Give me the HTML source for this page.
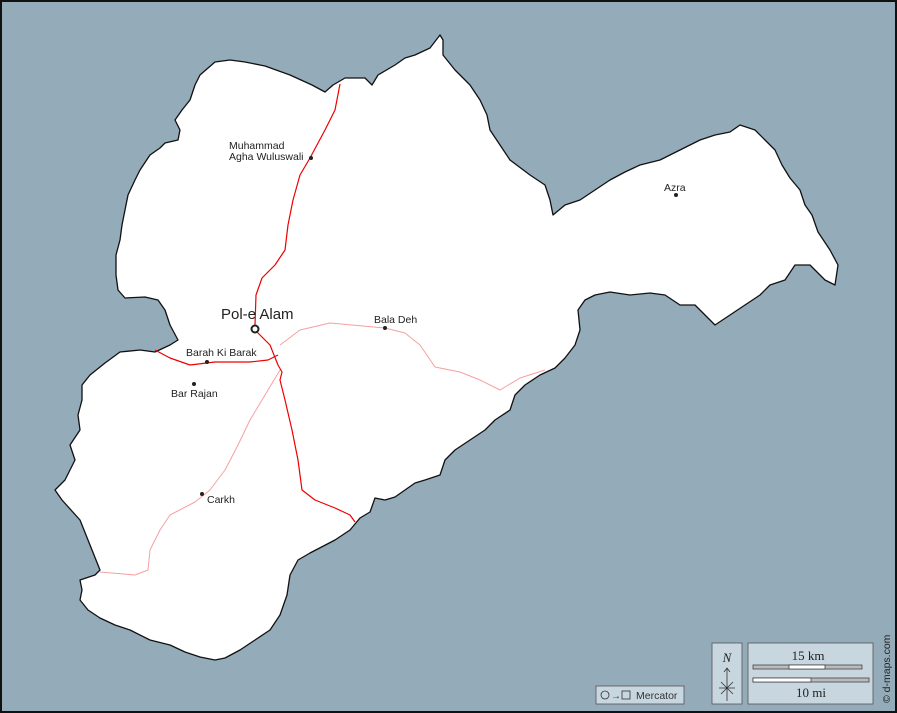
<!DOCTYPE html><html><head><meta charset="utf-8"><style>body{margin:0;width:897px;height:713px;overflow:hidden;background:#000}svg{display:block}text{font-family:"Liberation Sans",sans-serif}</style></head><body>
<svg width="897" height="713" viewBox="0 0 897 713">
<rect x="0" y="0" width="897" height="713" fill="#111"/>
<rect x="2" y="2" width="893" height="709" fill="#94abba"/>
<path fill="#fff" stroke="#111" stroke-width="1.3" stroke-linejoin="round" d="M200,75 L215,62 230,60 245,62 265,66 290,75 312,85 325,92 333,85 345,78 365,78 372,85 378,75 395,65 405,58 415,55 430,48 440,35 443,40 443,55 455,70 470,85 480,100 487,115 490,130 500,145 510,160 530,175 545,185 550,200 553,215 565,205 580,200 595,190 610,180 625,172 640,165 660,160 680,150 700,140 715,135 730,132 740,125 755,130 765,140 775,150 782,165 790,178 800,190 805,205 812,215 818,232 830,250 838,265 835,285 825,280 810,265 795,265 785,280 770,285 760,295 745,305 730,315 715,325 705,315 695,305 680,305 665,295 650,293 630,295 610,292 595,295 585,300 578,310 580,330 575,345 565,358 555,368 540,375 525,385 515,395 510,410 495,420 485,430 470,440 455,450 445,460 440,475 425,480 415,483 405,490 395,497 385,500 375,498 370,512 360,518 350,530 335,540 310,553 298,560 290,575 287,595 280,615 270,630 255,640 240,650 225,658 215,660 200,657 185,652 170,645 150,640 130,630 115,625 100,618 88,610 80,600 82,590 80,580 95,575 100,570 90,545 80,520 62,500 55,490 65,480 70,470 75,460 70,445 80,430 78,415 82,400 82,385 90,375 105,363 120,352 140,350 155,352 170,345 178,340 170,325 165,310 158,300 145,297 125,298 118,290 116,275 116,255 120,240 122,225 125,210 128,195 135,180 140,170 150,155 160,148 165,143 178,140 180,130 175,120 182,110 190,100 195,85 Z"/>
<g fill="none" stroke-linejoin="round">
<path stroke="#f5a0a0" stroke-width="1" d="M280,345 L300,330 330,323 385,328 405,333 420,345 435,367 460,372 480,380 500,390 520,378 545,370"/>
<path stroke="#f5a0a0" stroke-width="1" d="M280,370 L265,395 250,420 238,445 225,470 210,490 195,502 170,515 160,530 150,550 148,570 135,575 100,572"/>
<path stroke="#e00" stroke-width="1.2" d="M340,84 L335,110 325,130 310,158 300,175 293,200 288,225 285,250 275,265 262,278 256,295 255,325"/>
<path stroke="#e00" stroke-width="1.2" d="M257,332 L270,345 278,365 282,372 280,380 285,400 292,430 298,460 302,490 315,500 335,508 350,515 355,522"/>
<path stroke="#e00" stroke-width="1.2" d="M278,355 L268,360 250,362 215,362 190,365 170,358 155,350"/>
</g>
<g fill="#222">
<circle cx="311" cy="158" r="2"/><circle cx="676" cy="195" r="2"/><circle cx="385" cy="328" r="2"/><circle cx="207" cy="362" r="2"/><circle cx="194" cy="384" r="2"/><circle cx="202" cy="494" r="2"/>
</g>
<circle cx="255" cy="329" r="3.5" fill="#fff" stroke="#222" stroke-width="2"/>
<g fill="#222" font-size="10.5">
<text x="229" y="149">Muhammad</text><text x="229" y="160">Agha Wuluswali</text>
<text x="664" y="191">Azra</text>
<text x="374" y="323">Bala Deh</text>
<text x="186" y="356">Barah Ki Barak</text>
<text x="171" y="397">Bar Rajan</text>
<text x="207" y="503">Carkh</text>
<text x="221" y="319" font-size="15">Pol-e Alam</text>
</g>
<rect x="596" y="686" width="88" height="18" fill="#c8d6e0" stroke="#555" stroke-width="0.8"/>
<circle cx="605" cy="695" r="4" fill="none" stroke="#333" stroke-width="0.8"/>
<text x="611" y="699" font-size="10" fill="#333">→</text>
<rect x="622" y="691" width="8" height="8" fill="none" stroke="#333" stroke-width="0.8"/>
<text x="636" y="699" font-size="10.5" fill="#333">Mercator</text>
<rect x="712" y="643" width="30" height="61" fill="#c8d6e0" stroke="#555" stroke-width="0.8"/>
<text x="727" y="662" font-size="13" font-style="italic" text-anchor="middle" font-family="Liberation Serif" fill="#222" style="font-family:'Liberation Serif',serif">N</text>
<path d="M727,701 L727,668 M724,672 L727,668 730,672 M719,688 L735,688 M721,682 L733,694 M733,682 L721,694" stroke="#333" stroke-width="0.8" fill="none"/>
<rect x="748" y="643" width="125" height="61" fill="#c8d6e0" stroke="#555" stroke-width="0.8"/>
<text x="808" y="660" font-size="13" text-anchor="middle" fill="#222" style="font-family:'Liberation Serif',serif">15 km</text>
<rect x="753" y="665" width="109" height="4" fill="#bbb" stroke="#333" stroke-width="0.7"/>
<rect x="789" y="665" width="36" height="4" fill="#fff" stroke="#333" stroke-width="0.7"/>
<rect x="753" y="678" width="116" height="4" fill="#bbb" stroke="#333" stroke-width="0.7"/>
<rect x="753" y="678" width="58" height="4" fill="#fff" stroke="#333" stroke-width="0.7"/>
<text x="811" y="697" font-size="13" text-anchor="middle" fill="#222" style="font-family:'Liberation Serif',serif">10 mi</text>
<text transform="translate(890,703) rotate(-90)" font-size="10.5" fill="#222">© d-maps.com</text>
</svg>
</body></html>
